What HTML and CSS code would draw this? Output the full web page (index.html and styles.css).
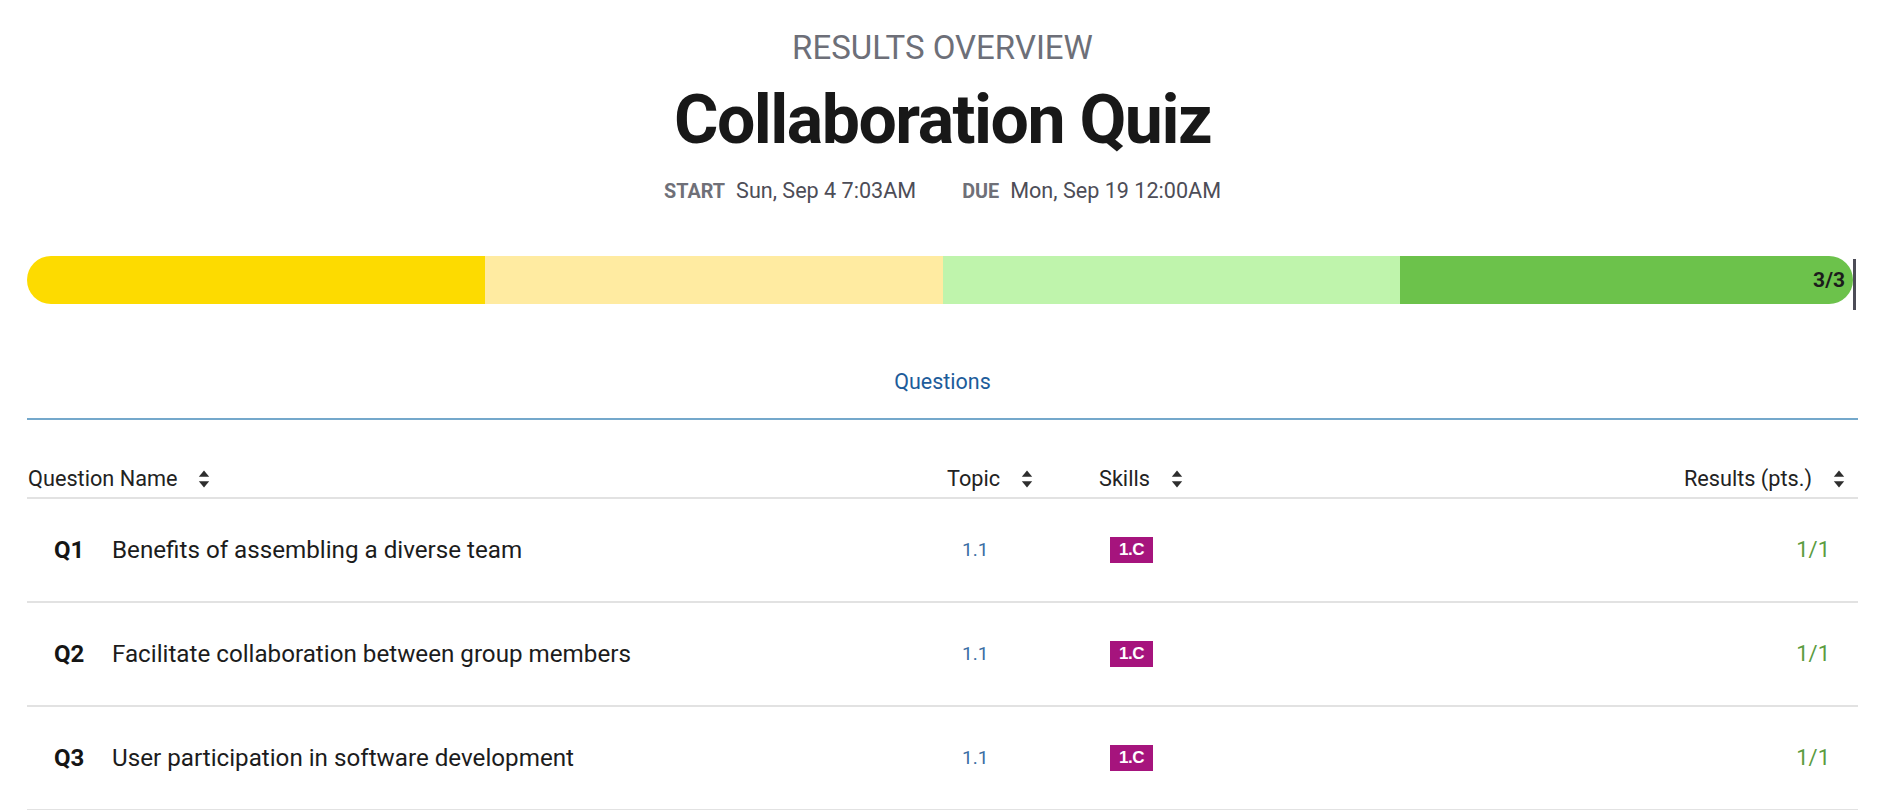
FILE: index.html
```html
<!DOCTYPE html>
<html lang="en">
<head>
<meta charset="utf-8">
<title>Collaboration Quiz – Results Overview</title>
<link rel="stylesheet" href="styles.css">
</head>
<body>
<main class="page">
  <header class="header">
    <div class="eyebrow">RESULTS OVERVIEW</div>
    <h1 class="title">Collaboration Quiz</h1>
    <div class="dates">
      <span class="date-group"><span class="date-label">START</span><span class="date-value">Sun, Sep 4 7:03AM</span></span>
      <span class="date-group"><span class="date-label">DUE</span><span class="date-value">Mon, Sep 19 12:00AM</span></span>
    </div>
  </header>

  <div class="progress">
    <div class="bar">
      <div class="seg seg-1"></div>
      <div class="seg seg-2"></div>
      <div class="seg seg-3"></div>
      <div class="seg seg-4"><span class="score">3/3</span></div>
    </div>
    <div class="marker"></div>
  </div>

  <nav class="tabs">
    <span class="tab">Questions</span>
  </nav>

  <div class="table">
    <div class="row head">
      <div class="cell c-name"><span>Question Name</span><svg class="sort" viewBox="0 0 10 16"><path d="M5 0.5 L9.6 6 L0.4 6 Z"/><path d="M0.4 10 L9.6 10 L5 15.5 Z"/></svg></div>
      <div class="cell c-topic"><span>Topic</span><svg class="sort" viewBox="0 0 10 16"><path d="M5 0.5 L9.6 6 L0.4 6 Z"/><path d="M0.4 10 L9.6 10 L5 15.5 Z"/></svg></div>
      <div class="cell c-skills"><span>Skills</span><svg class="sort" viewBox="0 0 10 16"><path d="M5 0.5 L9.6 6 L0.4 6 Z"/><path d="M0.4 10 L9.6 10 L5 15.5 Z"/></svg></div>
      <div class="cell c-result"><span>Results (pts.)</span><svg class="sort" viewBox="0 0 10 16"><path d="M5 0.5 L9.6 6 L0.4 6 Z"/><path d="M0.4 10 L9.6 10 L5 15.5 Z"/></svg></div>
    </div>

    <div class="row">
      <div class="cell c-name"><span class="qnum">Q1</span><span class="qtext">Benefits of assembling a diverse team</span></div>
      <div class="cell c-topic"><span class="topic">1.1</span></div>
      <div class="cell c-skills"><span class="badge">1.C</span></div>
      <div class="cell c-result"><span class="pts">1/1</span></div>
    </div>
    <div class="row">
      <div class="cell c-name"><span class="qnum">Q2</span><span class="qtext">Facilitate collaboration between group members</span></div>
      <div class="cell c-topic"><span class="topic">1.1</span></div>
      <div class="cell c-skills"><span class="badge">1.C</span></div>
      <div class="cell c-result"><span class="pts">1/1</span></div>
    </div>
    <div class="row">
      <div class="cell c-name"><span class="qnum">Q3</span><span class="qtext">User participation in software development</span></div>
      <div class="cell c-topic"><span class="topic">1.1</span></div>
      <div class="cell c-skills"><span class="badge">1.C</span></div>
      <div class="cell c-result"><span class="pts">1/1</span></div>
    </div>
  </div>
</main>
</body>
</html>
```

FILE: styles.css
```css
* { box-sizing: border-box; }

html, body {
  margin: 0;
  padding: 0;
  background: #ffffff;
}

body {
  font-family: Roboto, "Liberation Sans", Arial, sans-serif;
  color: #1c1c1c;
}

.page {
  padding: 0 31px 0 27px;
}

.header {
  padding-top: 30px;
  display: flex;
  flex-direction: column;
  align-items: center;
}

.eyebrow {
  font-size: 33px;
  line-height: 36px;
  color: #6d6f78;
  font-weight: 400;
}

.title {
  margin: 18px 0 0;
  font-size: 68px;
  line-height: 72px;
  font-weight: 700;
  letter-spacing: -1.5px;
  color: #181818;
}

.dates {
  margin-top: 21px;
  display: flex;
  gap: 46px;
  line-height: 28px;
}

.date-group {
  display: flex;
  align-items: baseline;
  gap: 11px;
}

.date-label {
  font-size: 19.8px;
  font-weight: 700;
  color: #6f7078;
}

.date-value {
  font-size: 21.6px;
  color: #4d4d57;
}

.progress {
  position: relative;
  margin-top: 50px;
  height: 48px;
  padding-right: 5px;
}

.bar {
  display: flex;
  height: 48px;
  border-radius: 24px;
  overflow: hidden;
}

.seg {
  display: flex;
  align-items: center;
  justify-content: flex-end;
}

.seg-1, .seg-2, .seg-3 {
  flex: none;
  width: calc(25% + 1.25px);
}

.seg-1 { background: #fddb00; }
.seg-2 { background: #ffeba1; }
.seg-3 { background: #bff4ac; }
.seg-4 { flex: 1; background: #6cc24b; padding-right: 8px; }

.score {
  font-size: 21px;
  font-weight: 700;
  color: #1c1c1c;
}

.marker {
  position: absolute;
  right: 2px;
  top: 3px;
  width: 3px;
  height: 51px;
  background: #4c4c57;
}

.tabs {
  margin-top: 63px;
  display: flex;
  justify-content: center;
  border-bottom: 2px solid #74a8cb;
}

.tab {
  padding: 3px 0 24px;
  font-size: 21.5px;
  line-height: 24px;
  color: #1d5c9b;
}

.table {
  margin-top: 46px;
}

.row {
  display: grid;
  grid-template-columns: 920px 152px 1fr 260px;
  align-items: center;
  height: 104px;
  border-bottom: 2px solid #e2e2e2;
}

.row.head {
  height: 33px;
  padding-bottom: 5px;
  align-items: end;
}

.cell {
  display: flex;
  align-items: center;
  font-size: 22px;
  line-height: 26px;
}

.head .cell {
  color: #222222;
  font-size: 21.7px;
}

.sort {
  width: 12px;
  height: 18px;
  margin-left: 21px;
  fill: #2e2e2e;
  flex: none;
}

.head .c-name { padding-left: 1px; }

.c-result {
  justify-content: flex-end;
}

.head .c-result { padding-right: 13px; }

.row:not(.head) .c-name { padding-left: 27px; }

.qnum {
  width: 58px;
  font-weight: 700;
  font-size: 24px;
  color: #151515;
}

.qtext {
  color: #1c1c1c;
  font-size: 24.2px;
}

.topic {
  padding-left: 15px;
  font-size: 19px;
  color: #3a6ea3;
}

.badge {
  margin-left: 11px;
  width: 43px;
  height: 26px;
  display: flex;
  align-items: center;
  justify-content: center;
  background: #a6147d;
  color: #ffffff;
  font-family: "Liberation Sans", Arial, sans-serif;
  font-weight: 700;
  font-size: 17px;
  letter-spacing: -0.5px;
}

.row:not(.head) .c-result { padding-right: 28px; }

.pts {
  font-size: 22px;
  color: #5b9c3f;
}
```
